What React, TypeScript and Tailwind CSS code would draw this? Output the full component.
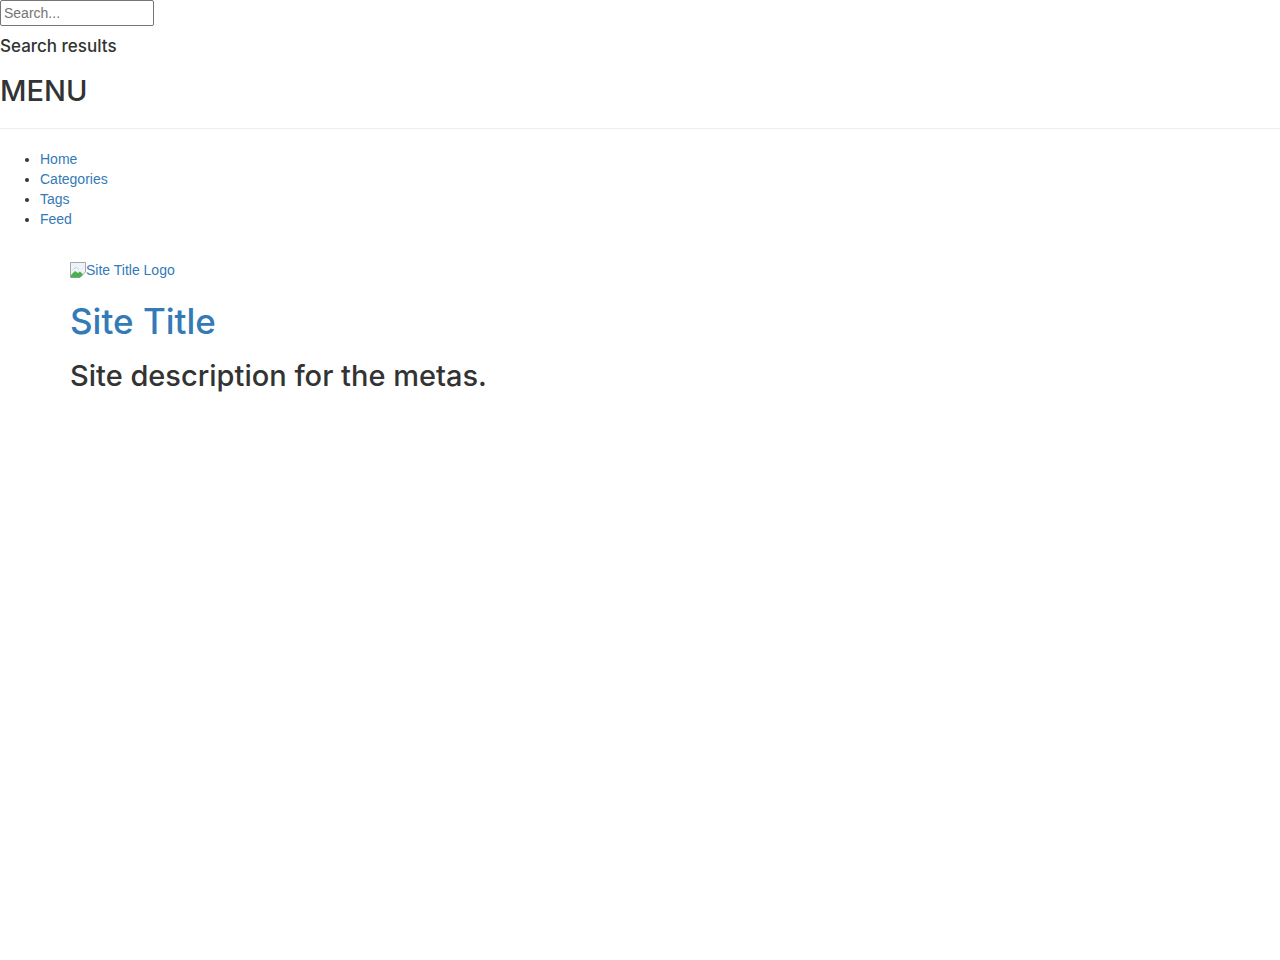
export default function App() {
    const links = ["Home", "Categories", "Tags", "Feed"];
    const heading = "font-['Inter','Liberation_Sans',sans-serif] font-medium";

    return (
        <div className="min-h-[960px] bg-white text-[#333] font-['Liberation_Sans',Arial,sans-serif]">
            <div className="border-b border-[#eee] pb-[21px]">
                <input
                    type="text"
                    placeholder="Search..."
                    className="block w-[154px] h-[26px] border border-[#767676] rounded-[2px] px-[3px] text-[14px] text-[#333] placeholder:text-[#757575] outline-none"
                />
                <p className={`mt-[10px] text-[17px] leading-[20px] ${heading}`}>Search results</p>
                <h2 className={`mt-[18px] text-[29px] leading-[33px] ${heading}`}>MENU</h2>
            </div>

            <ul className="mt-[20px] list-disc pl-[40px] text-[14px] leading-[20px]">
                {links.map((l) => (
                    <li key={l}>
                        <a href="#" className="text-[#337ab7]">
                            {l}
                        </a>
                    </li>
                ))}
            </ul>

            <div className="pl-[70px]">
                <a href="#" className="mt-[31px] flex items-center text-[14px] leading-[20px] text-[#337ab7]">
                    {/* broken image placeholder */}
                    <svg width="16" height="16" viewBox="0 0 16 16" className="shrink-0">
                        <path d="M0.5 0.5 H15.5 V10 L10 15.5 H0.5 Z" fill="#eef3f8" stroke="#a0a8b0" />
                        <path d="M1 13 L5 9 L8 11 L10 9.5 L13 12.5 L10 15.5 H1 Z" fill="#4caf50" />
                        <path d="M3 8 L6 5 L9 7.5" fill="none" stroke="#c8d4e0" />
                    </svg>
                    Site Title Logo
                </a>
                <h1 className={`mt-[21px] text-[35px] leading-[40px] ${heading}`}>
                    <a href="#" className="text-[#337ab7]">
                        Site Title
                    </a>
                </h1>
                <h2 className={`mt-[18px] text-[29px] leading-[33px] ${heading}`}>Site description for the metas.</h2>
            </div>
        </div>
    );
}
